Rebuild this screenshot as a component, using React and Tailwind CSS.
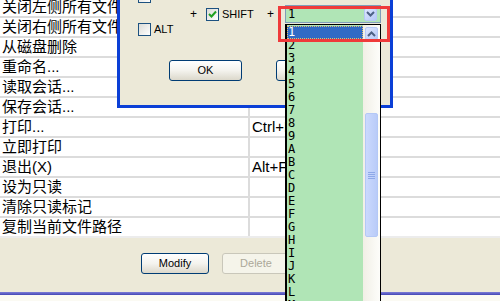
import React from 'react';

const rows = [
    ['关闭左侧所有文件', ''],
    ['关闭右侧所有文件', ''],
    ['从磁盘删除', ''],
    ['重命名...', ''],
    ['读取会话...', ''],
    ['保存会话...', ''],
    ['打印...', 'Ctrl+P'],
    ['立即打印', ''],
    ['退出(X)', 'Alt+F4'],
    ['设为只读', ''],
    ['清除只读标记', ''],
    ['复制当前文件路径', ''],
];

const keys = ['1', '2', '3', '4', '5', '6', '7', '8', '9', 'A', 'B', 'C', 'D', 'E', 'F', 'G', 'H', 'I', 'J', 'K', 'L', 'M'];

const CheckBox = ({ checked }) => (
    <div className="w-[13px] h-[13px] shrink-0 border border-[#1c5180] bg-linear-to-br from-[#dcdcd7] to-[#ffffff] flex items-center justify-center">
        {checked && (
            <svg width="9" height="9" viewBox="0 0 9 9">
                <path d="M1 4 L3.5 6.5 L8 1.5" stroke="#21a121" strokeWidth="2" fill="none" />
            </svg>
        )}
    </div>
);

const XpButton = ({ label, disabled, className = '' }) => (
    <div
        className={`h-[21px] rounded-[3px] border flex items-center justify-center text-[11px] ${
            disabled
                ? 'border-[#c9c7ba] bg-[#f5f4ea] text-[#aca899]'
                : 'border-[#003c74] bg-linear-to-b from-[#ffffff] via-[#f4f3ee] to-[#dcd8cb] text-black'
        } ${className}`}
    >
        {label}
    </div>
);

const Chevron = ({ up }) => (
    <svg width="9" height="6" viewBox="0 0 9 6">
        <path d={up ? 'M1 5 L4.5 1.5 L8 5' : 'M1 1 L4.5 4.5 L8 1'} stroke="#4d6185" strokeWidth="2" fill="none" />
    </svg>
);

const ArrowBtn = ({ up }) => (
    <div className="w-[13px] h-[13px] rounded-[2px] border border-[#b7c9f5] bg-linear-to-br from-[#dde6fe] to-[#b6c9f7] flex items-center justify-center">
        <Chevron up={up} />
    </div>
);

export default function App() {
    return (
        <div className="relative w-[500px] h-[301px] overflow-hidden bg-white" style={{ fontFamily: '"Liberation Sans", "Noto Sans CJK SC", sans-serif' }}>
            {/* table behind */}
            <div className="-mt-[2px] flex flex-col">
                {rows.map(([name, key], i) => (
                    <div
                        key={i}
                        className={`h-[20px] flex border-b-2 ${i === rows.length - 1 ? 'border-[#ececec]' : 'border-[#dcdcdc]'}`}
                    >
                        <div className="w-[248px] pl-[2px] text-[15px] leading-[18px] text-black whitespace-nowrap">{name}</div>
                        <div className="w-[2px] bg-[#dcdcdc]" />
                        <div className="flex-1 pl-[2px] text-[15px] leading-[18px] text-black">{key}</div>
                    </div>
                ))}
                <div className="h-[54px] bg-[#ece9d8] flex pt-[15px] pl-[141px] gap-[13px]">
                    <XpButton label="Modify" className="w-[68px]" />
                    <XpButton label="Delete" disabled className="w-[68px]" />
                </div>
                <div className="h-[3px] bg-linear-to-b from-[#7e7ed8] to-[#4545b4]" />
                <div className="h-[10px] bg-[#fbfaf3]" />
            </div>

            {/* shortcut dialog */}
            <div className="absolute left-[117px] top-0 w-[276px] h-[108px] bg-[#ece9d8] border-x-[3px] border-b-[3px] border-[#0b3fd6] text-[11px] text-black">
                <div className="-mt-[10px] pl-[18px]">
                    <CheckBox />
                </div>
                <div className="mt-[2px] h-[18px] flex items-center pl-[70px]">
                    <span className="w-[16px] text-[12px]">+</span>
                    <CheckBox checked />
                    <span className="ml-[3px] w-[45px]">SHIFT</span>
                    <span className="w-[18px] text-[12px]">+</span>
                    <div className="w-[96px] h-[18px] border border-[#7f9db9] bg-[#b0e5b6] flex items-center justify-between pl-[2px] pr-[3px]">
                        <span className="font-['DejaVu_Sans_Mono'] text-[12px]">1</span>
                        <ArrowBtn />
                    </div>
                </div>
                <div className="h-[13px] flex items-center pl-[18px]">
                    <CheckBox />
                    <span className="ml-[3px]">ALT</span>
                </div>
                <div className="mt-[24px] flex pl-[49px] gap-[34px]">
                    <XpButton label="OK" className="w-[73px]" />
                    <XpButton label="Cancel" className="w-[73px]" />
                </div>
            </div>

            {/* dropped list */}
            <div className="absolute left-[285px] top-[24px] w-[96px] h-[290px] border-l-2 border-r border-t border-black flex">
                <div className="flex-1 bg-[#b0e5b6] pt-[1px] font-['DejaVu_Sans_Mono'] text-[12px] text-black">
                    {keys.map((k, i) => (
                        <div
                            key={k}
                            className={`h-[13px] leading-[13px] pl-[1px] ${
                                i === 0 ? 'bg-[#316ac5] text-white outline-1 outline-dotted outline-[#e0c070] -outline-offset-1' : ''
                            }`}
                        >
                            {k}
                        </div>
                    ))}
                </div>
                <div className="w-[17px] bg-linear-to-r from-[#f1efe6] to-[#fdfdfa] flex flex-col items-center pt-[2px]">
                    <ArrowBtn up />
                    <div className="mt-[73px] w-[13px] h-[124px] rounded-[2px] border border-[#b4c8f6] bg-linear-to-r from-[#cbd9fd] to-[#b9cbf8] flex flex-col items-center justify-center gap-[1px]">
                        <div className="w-[7px] h-[1px] bg-[#8ea8e8]" />
                        <div className="w-[7px] h-[1px] bg-[#8ea8e8]" />
                        <div className="w-[7px] h-[1px] bg-[#8ea8e8]" />
                        <div className="w-[7px] h-[1px] bg-[#8ea8e8]" />
                    </div>
                </div>
            </div>

            {/* highlight */}
            <div className="absolute left-[278px] top-[6px] w-[112px] h-[36px] border-[3px] border-[#ef3a3a]" />
        </div>
    );
}
